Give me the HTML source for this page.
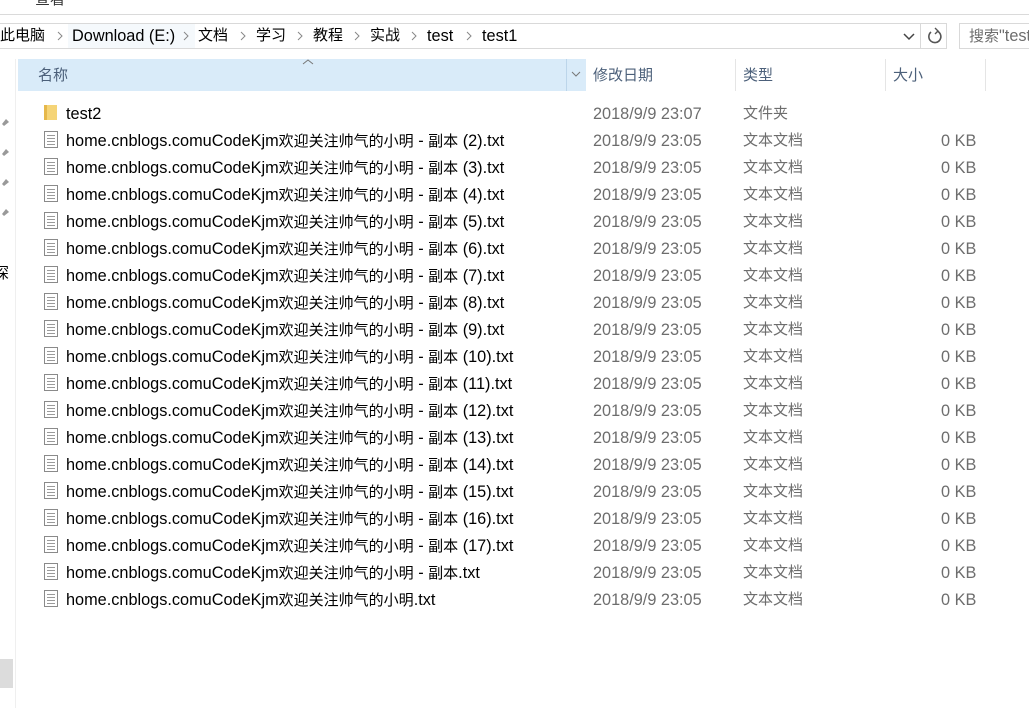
<!DOCTYPE html>
<html><head><meta charset="utf-8"><style>
*{margin:0;padding:0;box-sizing:border-box}
body{width:1029px;height:708px;background:#fff;position:relative;overflow:hidden;font-family:"Liberation Sans","Noto Sans CJK SC",sans-serif;font-size:16.3px;color:#000}
.a{position:absolute;white-space:nowrap;line-height:20px}
.c{font-size:15px}
.g{color:#6d6d6d}
.row{position:absolute;left:0;height:27px;width:1029px}
.ic{position:absolute;left:44px;top:4px;width:14px;height:17px;border:1px solid #8a8a8a;background:#fff}
.ic i{position:absolute;left:2px;width:8px;height:1px;background:#9a9a9a}
.sep{position:absolute;top:31px}
</style></head><body>
<div class="a c" style="left:35px;top:-10px;color:#333">查看</div>
<div class="a" style="left:0;top:14px;width:1029px;height:1px;background:#dadada"></div>
<div class="a" style="left:0;top:23px;width:947px;height:26px;border:1px solid #d9d9d9;border-left:none"></div>
<div class="a" style="left:68px;top:24px;width:127px;height:24px;background:#f5f9fc"></div>
<div class="a" style="left:920px;top:23px;width:1px;height:26px;background:#d9d9d9"></div>
<div class="a c" style="left:0;top:26px">此电脑</div>
<div class="a" style="left:72px;top:26px">Download (E:)</div>
<div class="a c" style="left:198px;top:26px">文档</div>
<div class="a c" style="left:256px;top:26px">学习</div>
<div class="a c" style="left:313px;top:26px">教程</div>
<div class="a c" style="left:370px;top:26px">实战</div>
<div class="a" style="left:427px;top:26px">test</div>
<div class="a" style="left:482px;top:26px">test1</div>
<svg class="sep" style="left:57px" width="6" height="10"><path d="M1 1l4 4-4 4" fill="none" stroke="#888"/></svg>
<svg class="sep" style="left:183px" width="6" height="10"><path d="M1 1l4 4-4 4" fill="none" stroke="#888"/></svg>
<svg class="sep" style="left:240px" width="6" height="10"><path d="M1 1l4 4-4 4" fill="none" stroke="#888"/></svg>
<svg class="sep" style="left:297px" width="6" height="10"><path d="M1 1l4 4-4 4" fill="none" stroke="#888"/></svg>
<svg class="sep" style="left:354px" width="6" height="10"><path d="M1 1l4 4-4 4" fill="none" stroke="#888"/></svg>
<svg class="sep" style="left:411px" width="6" height="10"><path d="M1 1l4 4-4 4" fill="none" stroke="#888"/></svg>
<svg class="sep" style="left:466px" width="6" height="10"><path d="M1 1l4 4-4 4" fill="none" stroke="#888"/></svg>
<svg class="a" style="left:903px;top:31px" width="12" height="10"><path d="M1 3l5 5 5-5" fill="none" stroke="#444" stroke-width="1.5"/></svg>
<svg class="a" style="left:926px;top:27px" width="18" height="18"><path d="M5 5a6 6 0 1 0 6-1" fill="none" stroke="#555" stroke-width="1.6"/><path d="M9 1l3 3-3 3" fill="none" stroke="#555" stroke-width="1.4"/></svg>
<div class="a" style="left:959px;top:23px;width:80px;height:26px;border:1px solid #d9d9d9"></div>
<div class="a g" style="left:969px;top:26px"><span class="c">搜索</span>"test</div>
<div class="a" style="left:15px;top:59px;width:1px;height:649px;background:#efefef"></div>
<div class="a" style="left:18px;top:59px;width:568px;height:32px;background:#d9ebf9"></div>
<div class="a" style="left:566px;top:59px;width:1px;height:32px;background:#bcd5ea"></div>
<svg class="a" style="left:302px;top:58px" width="12" height="8"><path d="M1 6l5-4 5 4" fill="none" stroke="#777" stroke-width="1"/></svg>
<svg class="a" style="left:570px;top:70px" width="12" height="8"><path d="M2 2l4 4 4-4" fill="none" stroke="#777" stroke-width="1"/></svg>
<div class="a c" style="left:38px;top:66px;color:#4c607a">名称</div>
<div class="a c" style="left:593px;top:66px;color:#4c607a">修改日期</div>
<div class="a" style="left:735px;top:59px;width:1px;height:32px;background:#e5e5e5"></div>
<div class="a c" style="left:743px;top:66px;color:#4c607a">类型</div>
<div class="a" style="left:885px;top:59px;width:1px;height:32px;background:#e5e5e5"></div>
<div class="a c" style="left:893px;top:66px;color:#4c607a">大小</div>
<div class="a" style="left:985px;top:59px;width:1px;height:32px;background:#e5e5e5"></div>
<svg class="a" style="left:0;top:116px" width="10" height="100"><g fill="#999"><path d="M2 8l4-5 3 3-5 4z"/><path d="M2 38l4-5 3 3-5 4z"/><path d="M2 68l4-5 3 3-5 4z"/><path d="M2 98l4-5 3 3-5 4z"/></g></svg>
<div class="a c" style="left:-6px;top:264px">深</div>
<div class="a" style="left:0;top:659px;width:13px;height:29px;background:#dcdcdc"></div>
<div class="row" style="top:100px"><div class="a" style="left:44px;top:5px;width:13px;height:15px;background:#f5d477;border-left:3px solid #e6b84a"></div><div class="a" style="left:66px;top:4px">test2</div><div class="a g" style="left:593px;top:4px">2018/9/9 23:07</div><div class="a g c" style="left:743px;top:4px">文件夹</div></div>
<div id="rows"></div>
<script>
var n=["(2)","(3)","(4)","(5)","(6)","(7)","(8)","(9)","(10)","(11)","(12)","(13)","(14)","(15)","(16)","(17)"],h="";
var C='<span class="c">欢迎关注帅气的小明</span>';
var names=n.map(function(x){return "home.cnblogs.comuCodeKjm"+C+' - <span class="c">副本</span> '+x+".txt"});
names.push("home.cnblogs.comuCodeKjm"+C+' - <span class="c">副本</span>.txt');names.push("home.cnblogs.comuCodeKjm"+C+".txt");
names.forEach(function(s,i){var t=127+i*27;
h+='<div class="row" style="top:'+t+'px"><div class="ic"><i style="top:3px"></i><i style="top:6px"></i><i style="top:9px"></i><i style="top:12px"></i></div><div class="a" style="left:66px;top:4px">'+s+'</div><div class="a g" style="left:593px;top:4px">2018/9/9 23:05</div><div class="a g c" style="left:743px;top:4px">文本文档</div><div class="a g" style="left:941px;top:4px">0 KB</div></div>';});
document.getElementById("rows").innerHTML=h;
</script>
</body></html>
